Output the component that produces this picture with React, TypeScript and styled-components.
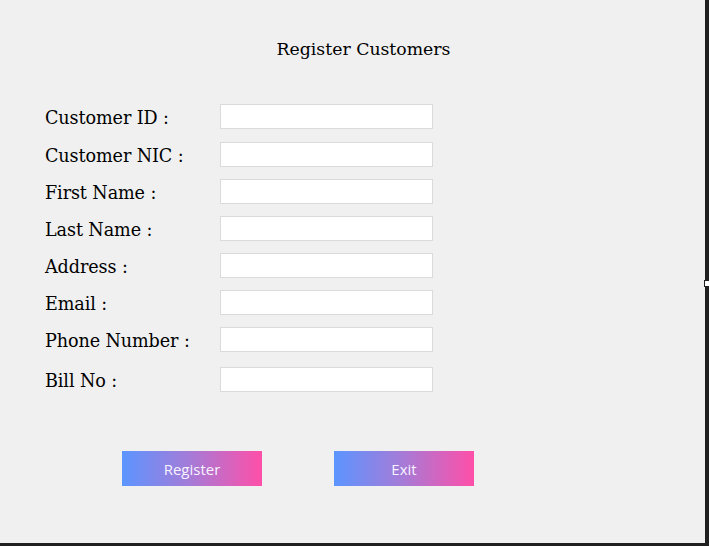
import styled, { createGlobalStyle } from "styled-components";

const GlobalStyle = createGlobalStyle`
  html, body {
    margin: 0;
    padding: 0;
    background: #f0f0f0;
    overflow: hidden;
  }
`;

const Frame = styled.div`
  position: relative;
  width: 705px;
  height: 543px;
  background: #f0f0f0;
  border-right: 4px solid #202020;
  border-bottom: 3px solid #202020;
  display: flex;
  flex-direction: column;
  font-family: "DejaVu Serif", "Liberation Serif", serif;
  color: #000;
`;

const Notch = styled.div`
  position: absolute;
  right: -5px;
  top: 280px;
  width: 5px;
  height: 5px;
  background: #fff;
  border: 1px solid #202020;
  border-right: none;
`;

const Title = styled.h1`
  margin: 0;
  padding-top: 39px;
  text-align: center;
  font-size: 17.3px;
  font-weight: normal;
  line-height: 20px;
  padding-left: 22px;
`;

const Form = styled.div`
  display: flex;
  flex-direction: column;
  gap: 12px;
  margin-top: 45px;
  padding-left: 45px;
`;

const Row = styled.div<{ $extra?: number }>`
  display: grid;
  grid-template-columns: 175px 213px;
  align-items: center;
  height: 25px;
  margin-top: ${(p) => p.$extra ?? 0}px;
`;

const Label = styled.label`
  font-size: 17.6px;
  letter-spacing: -0.1px;
  white-space: nowrap;
  padding-top: 2px;
`;

const Field = styled.input`
  box-sizing: border-box;
  width: 213px;
  height: 25px;
  border: 1px solid #dadada;
  background: #fff;
  outline: none;
`;

const Actions = styled.div`
  display: flex;
  gap: 72px;
  margin-top: 59px;
  padding-left: 122px;
`;

const GradientButton = styled.button`
  width: 140px;
  height: 35px;
  border: none;
  background: linear-gradient(90deg, #5c95ff 0%, #a77ad6 50%, #ff4fa8 100%);
  color: #f7f3ff;
  font-family: "Open Sans", "Noto Sans", sans-serif;
  font-size: 15px;
  padding: 0;
  cursor: pointer;
`;

const fields = [
  "Customer ID :",
  "Customer NIC :",
  "First Name :",
  "Last Name :",
  "Address :",
  "Email :",
  "Phone Number :",
];

export default function App() {
  return (
    <>
      <GlobalStyle />
      <Frame>
        <Title>Register Customers</Title>
        <Form>
          {fields.map((f, i) => (
            <Row key={f} $extra={i === 1 ? 1 : 0}>
              <Label>{f}</Label>
              <Field />
            </Row>
          ))}
          <Row $extra={3}>
            <Label>Bill No :</Label>
            <Field />
          </Row>
        </Form>
        <Actions>
          <GradientButton>Register</GradientButton>
          <GradientButton>Exit</GradientButton>
        </Actions>
        <Notch />
      </Frame>
    </>
  );
}
